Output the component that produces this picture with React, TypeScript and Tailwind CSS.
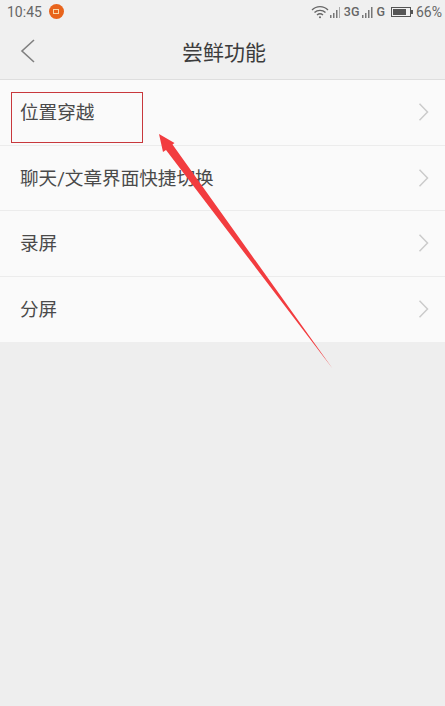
const FONT = "font-['Roboto','Noto_Sans_CJK_SC','Noto_Sans',sans-serif]";

function Chevron() {
  return (
    <svg width="12" height="20" viewBox="0 0 12 20" fill="none" className="shrink-0">
      <path d="M2.5 1.8 L10.5 10 L2.5 18.2" stroke="#cbcbcb" strokeWidth="1.5" />
    </svg>
  );
}

function Row({ label, last }: { label: string; last?: boolean }) {
  return (
    <div className={`flex h-[65.5px] items-center justify-between pl-[20px] pr-[16px] ${last ? "" : "border-b border-[#ececec]"}`}>
      <span className="pt-[2px] text-[18.6px] leading-[24px] text-[#4a4a4a]">{label}</span>
      <Chevron />
    </div>
  );
}

function StatusBar() {
  return (
    <div className="flex h-[21px] items-center justify-between pl-[7px] pr-[3px] text-[#666]">
      <div className="flex items-center gap-[7px]">
        <span className="text-[14px] leading-[20px]">10:45</span>
        <span className="flex h-[15px] w-[15px] items-center justify-center rounded-full bg-[#e8641c]">
          <span className="h-[5px] w-[6px] border border-[#f8d8a8]" />
        </span>
      </div>
      <div className="flex items-center">
        <svg width="18" height="14" viewBox="0 0 18 14" fill="none" stroke="#666" strokeWidth="1.4">
          <path d="M1 5 C5.5 0.5 12.5 0.5 17 5" />
          <path d="M3.5 7.5 C6.5 4.6 11.5 4.6 14.5 7.5" />
          <path d="M6 10 C7.8 8.6 10.2 8.6 12 10" />
          <circle cx="9" cy="12.3" r="1" fill="#666" stroke="none" />
        </svg>
        <svg width="13" height="12" viewBox="0 0 13 12" fill="#777">
          <rect x="1" y="9" width="1.5" height="3" />
          <rect x="4" y="7" width="1.5" height="5" />
          <rect x="7" y="4" width="1.5" height="8" />
          <rect x="10" y="1" width="1" height="11" fill="#aaa" />
        </svg>
        <span className="ml-[2px] text-[12.5px] font-medium leading-[20px]">3G</span>
        <svg width="13" height="12" viewBox="0 0 13 12" fill="#777" className="ml-[3px]">
          <rect x="0" y="9" width="1.5" height="3" />
          <rect x="3" y="7" width="1.5" height="5" />
          <rect x="6" y="4" width="1.5" height="8" />
          <rect x="9" y="1" width="1.5" height="11" />
        </svg>
        <span className="ml-[1px] text-[12.5px] font-medium leading-[20px]">G</span>
        <span className="ml-[5.5px] flex h-[10px] w-[20px] items-center border border-[#555] p-[1px]">
          <span className="h-full w-[13px] bg-[#555]" />
        </span>
        <span className="h-[4px] w-[2px] bg-[#555]" />
        <span className="ml-[3.5px] text-[14px] leading-[20px]">66%</span>
      </div>
    </div>
  );
}

export default function App() {
  return (
    <div className={`relative flex h-[706px] w-[445px] flex-col overflow-hidden bg-[#eeeeee] ${FONT}`}>
      <header className="h-[80px] shrink-0 border-b border-[#dedede] bg-[#f0f0f0] pt-[1px]">
        <StatusBar />
        <div className="flex h-[58px] items-center">
          <svg width="16" height="24" viewBox="0 0 16 24" fill="none" className="ml-[20px] shrink-0">
            <path d="M14 1 L2 12 L14 23" stroke="#808080" strokeWidth="1.6" />
          </svg>
          <h1 className="ml-[146px] mt-[4px] text-[21px] font-normal leading-[28px] text-[#3c3c3c]">尝鲜功能</h1>
        </div>
      </header>
      <div className="bg-[#fafafa]">
        <Row label="位置穿越" />
        <Row label="聊天/文章界面快捷切换" />
        <Row label="录屏" />
        <Row label="分屏" last />
      </div>
      <div className="absolute left-[11px] top-[92px] h-[51px] w-[132px] border border-[#c8383c]" />
      <svg width="445" height="706" viewBox="0 0 445 706" className="absolute left-0 top-0">
        <polygon points="159,134 174.5,143 172.5,144.5 332.5,368.5 166,150 163,152" fill="#f23c3f" />
      </svg>
    </div>
  );
}
